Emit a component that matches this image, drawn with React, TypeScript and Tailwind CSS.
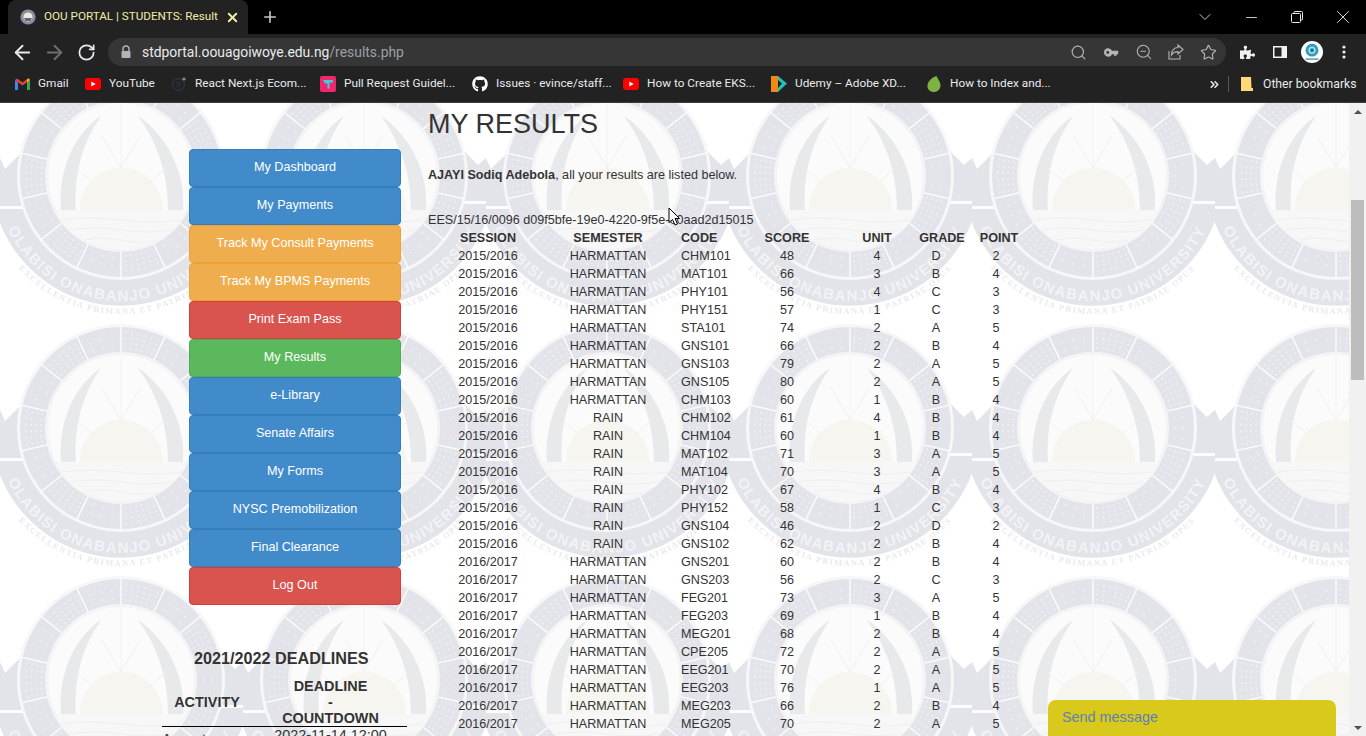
import { ArrowLeft, ArrowRight, RotateCw, Search, ZoomOut, Star, ChevronDown, Minus, X, Plus, ChevronsRight } from "lucide-react";
import { FaGithub, FaPuzzlePiece } from "react-icons/fa";

const NAV = [
  ["My Dashboard", "blue"],
  ["My Payments", "blue"],
  ["Track My Consult Payments", "orange"],
  ["Track My BPMS Payments", "orange"],
  ["Print Exam Pass", "red"],
  ["My Results", "green"],
  ["e-Library", "blue"],
  ["Senate Affairs", "blue"],
  ["My Forms", "blue"],
  ["NYSC Premobilization", "blue"],
  ["Final Clearance", "blue"],
  ["Log Out", "red"],
];

const NAV_STYLE: Record<string, string> = {
  blue: "bg-[#428bca] border-[#357ebd]",
  orange: "bg-[#f0ad4e] border-[#eea236]",
  red: "bg-[#d9534f] border-[#d43f3a]",
  green: "bg-[#5cb85c] border-[#4cae4c]",
};

const H = "HARMATTAN";
const R = "RAIN";
const A = "2015/2016";
const B = "2016/2017";

const RESULTS = [
  [A, H, "CHM101", "48", "4", "D", "2"],
  [A, H, "MAT101", "66", "3", "B", "4"],
  [A, H, "PHY101", "56", "4", "C", "3"],
  [A, H, "PHY151", "57", "1", "C", "3"],
  [A, H, "STA101", "74", "2", "A", "5"],
  [A, H, "GNS101", "66", "2", "B", "4"],
  [A, H, "GNS103", "79", "2", "A", "5"],
  [A, H, "GNS105", "80", "2", "A", "5"],
  [A, H, "CHM103", "60", "1", "B", "4"],
  [A, R, "CHM102", "61", "4", "B", "4"],
  [A, R, "CHM104", "60", "1", "B", "4"],
  [A, R, "MAT102", "71", "3", "A", "5"],
  [A, R, "MAT104", "70", "3", "A", "5"],
  [A, R, "PHY102", "67", "4", "B", "4"],
  [A, R, "PHY152", "58", "1", "C", "3"],
  [A, R, "GNS104", "46", "2", "D", "2"],
  [A, R, "GNS102", "62", "2", "B", "4"],
  [B, H, "GNS201", "60", "2", "B", "4"],
  [B, H, "GNS203", "56", "2", "C", "3"],
  [B, H, "FEG201", "73", "3", "A", "5"],
  [B, H, "FEG203", "69", "1", "B", "4"],
  [B, H, "MEG201", "68", "2", "B", "4"],
  [B, H, "CPE205", "72", "2", "A", "5"],
  [B, H, "EEG201", "70", "2", "A", "5"],
  [B, H, "EEG203", "76", "1", "A", "5"],
  [B, H, "MEG203", "66", "2", "B", "4"],
  [B, H, "MEG205", "70", "2", "A", "5"],
];

// seal geometry, tile coordinates
const CX = 121;
const CY = 106;
const SPOKES = Array.from({ length: 14 }, (_, i) => (i * 360) / 14 - 90);
const RING_DOTS = SPOKES.flatMap((a, i) =>
  i % 2 === 0
    ? [80, 85, 90, 95].flatMap((r) =>
        [-10, -6, -2, 2, 6, 10].map((d) => {
          const t = ((a + 12.8 + d) * Math.PI) / 180;
          return [CX + r * Math.cos(t), CY + r * Math.sin(t)];
        })
      )
    : [82, 90].flatMap((r) =>
        [-7, 0, 7].map((d) => {
          const t = ((a + 12.8 + d) * Math.PI) / 180;
          return [CX + r * Math.cos(t), CY + r * Math.sin(t)];
        })
      )
);

function SealBackground() {
  return (
    <svg className="absolute inset-0 w-full h-full" aria-hidden="true">
      <defs>
        <path id="bandArc" d={`M ${CX - 125} ${CY} A 125 125 0 0 0 ${CX + 125} ${CY}`} />
        <path id="mottoArc" d={`M ${CX - 138} ${CY} A 138 138 0 0 0 ${CX + 138} ${CY}`} />
        <pattern id="seal" x="0" y="-33" width="243" height="252" patternUnits="userSpaceOnUse">
          <rect width="243" height="252" fill="#ffffff" />
          {/* banner ends and text band */}
          <path d="M221 81 L235 95 L243 88 V151 L180 151 V90 Z" fill="#e3e4ea" />
          <path d="M0 88 L5 99 L21 83 L60 90 V153 H0 Z" fill="#e3e4ea" />
          <path d={`M 0 153 A 130 130 0 0 0 243 151 L 200 130 L 40 130 Z`} fill="#e3e4ea" />
          <rect x="218" y="131" width="25" height="3" fill="#fdfdfd" />
          <rect x="0" y="136" width="24" height="3" fill="#fdfdfd" />
          <text fontFamily="Liberation Sans, sans-serif" fontSize="15" fontWeight="700" fill="#f3f3f6" letterSpacing="1.4">
            <textPath href="#bandArc" startOffset="50%" textAnchor="middle">
              OLABISI ONABANJO UNIVERSITY
            </textPath>
          </text>
          <text fontFamily="Liberation Serif, serif" fontSize="8.5" fontWeight="700" fill="#e9eaee" letterSpacing="1.4">
            <textPath href="#mottoArc" startOffset="50%" textAnchor="middle">
              EXCELLENTIA PRIMANA ET PATRIAE OPUS
            </textPath>
          </text>
          {/* dotted ring */}
          <circle cx={CX} cy={CY} r="104" fill="#f7f7f9" />
          <circle cx={CX} cy={CY} r="101" fill="#e3e4ea" />
          {RING_DOTS.map(([x, y], i) => (
            <circle key={i} cx={x} cy={y} r="1" fill="#f0f0f4" />
          ))}
          {SPOKES.map((a) => {
            const t = (a * Math.PI) / 180;
            return (
              <line
                key={a}
                x1={CX + 74 * Math.cos(t)}
                y1={CY + 74 * Math.sin(t)}
                x2={CX + 102 * Math.cos(t)}
                y2={CY + 102 * Math.sin(t)}
                stroke="#fafafb"
                strokeWidth="1.6"
              />
            );
          })}
          {/* inner field */}
          <circle cx={CX} cy={CY} r="76" fill="#f4f4f6" />
          <circle cx={CX} cy={CY} r="73" fill="#fbfbfb" />
          <line x1={CX} y1="34" x2={CX} y2="98" stroke="#f3f3f3" strokeWidth="1" />
          <path d="M101 46 C74 64 58 100 61 140 H76 C74 108 80 76 101 46 Z" fill="#e8e9ea" />
          <path d="M138 46 C165 64 186 100 183 140 H168 C168 108 160 76 138 46 Z" fill="#e8e9ea" />
          <path d="M121 98 L102 66 M121 98 L140 66 M92 112 L76 98 M150 112 L166 98" stroke="#f1f1f1" strokeWidth="1" />
          <path d="M80 140 C80 116 98 98 121 98 C144 98 163 116 163 140 Z" fill="#f6f5ef" />
          <path d="M56 140 H186 C178 166 150 178 121 178 C92 178 64 166 56 140 Z" fill="#f7f7f8" />
          <path d="M62 150 Q90 146 121 150 T180 150 M70 160 Q95 156 121 160 T172 160 M84 170 Q104 166 121 170 T158 170" fill="none" stroke="#efeff1" strokeWidth="1" />
        </pattern>
      </defs>
      <rect width="100%" height="100%" fill="url(#seal)" />
    </svg>
  );
}

function Bookmark({ w, icon, label }: { w: string; icon: React.ReactNode; label: string }) {
  return (
    <div className={`flex items-center shrink-0 ${w}`}>
      <span className="w-[16px] h-[16px] mr-[8px] grid place-items-center shrink-0">{icon}</span>
      <span className="text-[11.8px] text-[#e8eaed] whitespace-nowrap">{label}</span>
    </div>
  );
}

function YouTubeIcon() {
  return (
    <svg width="16" height="12" viewBox="0 0 16 12">
      <rect width="16" height="12" rx="3" fill="#f00" />
      <path d="M6.3 3.4 L10.6 6 L6.3 8.6 Z" fill="#fff" />
    </svg>
  );
}

function BrowserChrome() {
  return (
    <header className="shrink-0 bg-[#222222] border-b border-[#3b3b3b] h-[103px] flex flex-col" style={{ fontFamily: 'Roboto, sans-serif' }}>
      {/* tab strip */}
      <div className="h-[34px] bg-black flex items-stretch pl-[8px] text-[#e8eaed]">
        <div className="w-[240px] bg-[#222222] rounded-t-[8px] flex items-center pl-[12px] pr-[8px]">
          <svg width="16" height="16" viewBox="0 0 16 16" className="shrink-0">
            <rect width="16" height="16" fill="#23233a" />
            <circle cx="8" cy="8" r="7.6" fill="#8d8d98" />
            <circle cx="8" cy="8" r="4.6" fill="#ece9da" />
            <path d="M4 9 H12 L10.5 12 H5.5 Z" fill="#66667a" />
          </svg>
          <span className="ml-[8px] w-[176px] overflow-hidden whitespace-nowrap text-[11.7px] text-[#f0eca6]">OOU PORTAL | STUDENTS: Result</span>
          <X size={15} strokeWidth={3} className="ml-auto text-[#f0eca6]" />
        </div>
        <div className="w-[44px] grid place-items-center">
          <Plus size={18} strokeWidth={2.2} className="text-[#c4c7c5]" />
        </div>
        <div className="ml-auto flex items-center text-[#e8eaed]">
          <span className="w-[46px] grid place-items-center"><ChevronDown size={20} strokeWidth={1} /></span>
          <span className="w-[46px] grid place-items-center"><Minus size={17} strokeWidth={1.2} /></span>
          <span className="w-[46px] grid place-items-center">
            <svg width="12" height="12" viewBox="0 0 12 12" fill="none" stroke="currentColor" strokeWidth="1">
              <rect x="0.5" y="2.5" width="9" height="9" rx="1" />
              <path d="M3 2.5 V1.5 A1 1 0 0 1 4 0.5 H10.5 A1 1 0 0 1 11.5 1.5 V8 A1 1 0 0 1 10.5 9 H9.5" />
            </svg>
          </span>
          <span className="w-[46px] grid place-items-center"><X size={22} strokeWidth={1} /></span>
        </div>
      </div>

      {/* toolbar */}
      <div className="h-[32px] flex items-start text-[#e8eaed]">
        <div className="w-[108px] h-[36px] flex items-center pl-[6px]">
          <span className="w-[32px] grid place-items-center"><ArrowLeft size={23} strokeWidth={2} /></span>
          <span className="w-[32px] grid place-items-center"><ArrowRight size={23} strokeWidth={2} className="text-[#6d6f72]" /></span>
          <span className="w-[32px] grid place-items-center"><RotateCw size={19} strokeWidth={2.2} /></span>
        </div>
        <div className="mt-[4px] w-[1118px] h-[28px] rounded-full bg-[#363636] flex items-center pl-[12px] pr-[1px]">
          <svg width="12" height="14" viewBox="0 0 12 14" className="text-[#b0b3b8]">
            <path d="M3 6 V4 a3 3 0 0 1 6 0 V6" fill="none" stroke="currentColor" strokeWidth="1.4" />
            <rect x="1.5" y="6" width="9" height="7" rx="1" fill="currentColor" />
          </svg>
          <span className="ml-[10px] mt-[1px] text-[13.9px] text-[#e8eaed]">stdportal.oouagoiwoye.edu.ng<span className="text-[#9aa0a6]">/results.php</span></span>
          <div className="ml-auto flex items-center text-[#b4b6ba]">
            <span className="w-[32.5px] grid place-items-center"><Search size={17} strokeWidth={1.6} /></span>
            <span className="w-[32.5px] grid place-items-center">
              <svg width="15" height="9" viewBox="0 0 18 10" fill="currentColor">
                <path d="M5 0 a5 5 0 1 0 4.6 7 H12 V9 H15 V7 H17 V3 H9.6 A5 5 0 0 0 5 0 Z M4.5 3.3 a1.7 1.7 0 1 1 0 3.4 a1.7 1.7 0 0 1 0 -3.4 Z" fillRule="evenodd" />
              </svg>
            </span>
            <span className="w-[32.5px] grid place-items-center"><ZoomOut size={18} strokeWidth={1.4} /></span>
            <span className="w-[32.5px] grid place-items-center">
              <svg width="16" height="16" viewBox="0 0 16 16" fill="none" stroke="currentColor" strokeWidth="1.1">
                <path d="M1 7 V15 H12 V11" />
                <path d="M15 5.5 L10 1 V3.5 C6 3.5 3.5 6.5 3.5 11 C5 8.5 7 7.6 10 7.6 V10 Z" />
              </svg>
            </span>
            <span className="w-[32.5px] grid place-items-center"><Star size={17} strokeWidth={1.6} /></span>
          </div>
        </div>
        <div className="flex-1 h-[36px] flex items-center pl-[14px] text-[#f1f1f1]">
          <FaPuzzlePiece size={15} />
          <svg width="14" height="12" viewBox="0 0 14 12" className="ml-[18px]">
            <rect width="14" height="12" fill="#f1f1f1" />
            <rect x="1.5" y="1.5" width="7" height="9" fill="#222222" />
          </svg>
          <svg width="22" height="22" viewBox="0 0 24 24" className="ml-[14px]">
            <circle cx="12" cy="12" r="12" fill="#ffffff" />
            <circle cx="12" cy="10" r="7" fill="#2a9dc0" />
            <circle cx="12" cy="10" r="4" fill="#a8dde6" />
            <circle cx="12" cy="10" r="2" fill="#1b6f9a" />
            <rect x="5" y="19" width="14" height="1.5" fill="#5a8fb0" />
          </svg>
          <svg width="4" height="14" viewBox="0 0 4 14" className="ml-[19px]" fill="currentColor">
            <circle cx="2" cy="2" r="1.6" />
            <circle cx="2" cy="7" r="1.6" />
            <circle cx="2" cy="12" r="1.6" />
          </svg>
        </div>
      </div>

      {/* bookmarks */}
      <div className="flex-1 flex items-center pl-[14px]">
        <Bookmark
          w="w-[71px]"
          label="Gmail"
          icon={
            <svg width="15" height="12" viewBox="0 0 15 12">
              <path d="M0 2 V12 H3 V4.5 Z" fill="#4285f4" />
              <path d="M15 2 V12 H12 V4.5 Z" fill="#34a853" />
              <path d="M0 2 L7.5 7.6 L15 2 L13 0.5 L7.5 4.5 L2 0.5 Z" fill="#ea4335" />
              <path d="M12 4.5 L15 2 L13.5 0.3 L12 1.4 Z" fill="#fbbc04" />
            </svg>
          }
        />
        <Bookmark w="w-[86px]" label="YouTube" icon={<YouTubeIcon />} />
        <Bookmark
          w="w-[149px]"
          label="React Next.js Ecom..."
          icon={
            <svg width="16" height="16" viewBox="0 0 16 16" fill="none">
              <circle cx="7.5" cy="8.5" r="6" stroke="#2b3340" strokeWidth="1.5" />
              <path d="M5.5 6.5 H9.5 M5.5 8.5 H9.5 M5.5 10.5 H9.5" stroke="#2b3340" />
              <circle cx="13" cy="3" r="1.6" fill="#8a8f98" />
            </svg>
          }
        />
        <Bookmark
          w="w-[152px]"
          label="Pull Request Guidel..."
          icon={
            <svg width="16" height="16" viewBox="0 0 16 16">
              <rect width="16" height="16" rx="2" fill="#f0266f" />
              <path d="M3 4 H13 V6.5 H9.5 V12.5 H7.5 V7.5 H5 Z" fill="#3ecfd8" />
            </svg>
          }
        />
        <Bookmark w="w-[151px]" label="Issues · evince/staff..." icon={<FaGithub size={16} color="#ffffff" />} />
        <Bookmark w="w-[148px]" label="How to Create EKS..." icon={<YouTubeIcon />} />
        <Bookmark
          w="w-[155px]"
          label="Udemy – Adobe XD..."
          icon={
            <svg width="16" height="16" viewBox="0 0 16 16">
              <rect x="0" y="0" width="7" height="16" fill="#f08a14" />
              <path d="M7 0 L16 7.5 L7 16 V12 L11 7.5 L7 4 Z" fill="#22c3b6" />
            </svg>
          }
        />
        <Bookmark
          w="w-[282px]"
          label="How to Index and..."
          icon={
            <svg width="14" height="16" viewBox="0 0 14 16">
              <path d="M9.5 0 C4 2 0 6 0.5 11 C1 14.5 4 16 7 16 C11 16 13.5 13 13.5 9 C13.5 6 11 3.5 9.5 0 Z" fill="#7cb342" />
            </svg>
          }
        />
        <ChevronsRight size={13} strokeWidth={3} className="text-[#e8eaed]" />
        <span className="ml-[7px] w-px h-[16px] bg-[#555555]" />
        <svg width="12" height="14" viewBox="0 0 12 14" className="ml-[12px]">
          <path d="M0 0 H10 L10.5 11 H12 V14 H0 Z" fill="#fdd97a" />
        </svg>
        <span className="ml-[10px] text-[12.2px] text-[#e8eaed] whitespace-nowrap">Other bookmarks</span>
      </div>
    </header>
  );
}

function ResultRow({ cells, bold }: { cells: string[]; bold?: boolean }) {
  return (
    <div className={`flex h-[18px] leading-[18px] text-[12.6px] ${bold ? "font-bold" : ""}`}>
      <div className="w-[120px] text-center">{cells[0]}</div>
      <div className="w-[120px] text-center">{cells[1]}</div>
      <div className="w-[70px] pl-[13px]">{cells[2]}</div>
      <div className="w-[98px] text-center">{cells[3]}</div>
      <div className="w-[82px] text-center">{cells[4]}</div>
      <div className={`w-[48px] text-center ${bold ? "" : "pr-[12px]"}`}>{cells[5]}</div>
      <div className={`w-[66px] text-center ${bold ? "" : "pr-[6px]"}`}>{cells[6]}</div>
    </div>
  );
}

export default function App() {
  return (
    <div className="h-screen w-full flex flex-col overflow-hidden bg-white">
      <BrowserChrome />

      <div className="relative flex-1 flex overflow-hidden" style={{ fontFamily: '"Liberation Sans", Arial, sans-serif' }}>
        <main className="relative flex-1 overflow-hidden text-[#333333]">
          <SealBackground />

          <div className="relative flex pl-[162px]">
            {/* left column */}
            <aside className="w-[245px] pt-[46px] shrink-0">
              <nav className="ml-[27px] w-[212px]">
                {NAV.map(([label, tone]) => (
                  <a key={label} className={`block h-[38px] border rounded-[4px] pt-[7px] text-center text-[12.6px] leading-[20px] text-white ${NAV_STYLE[tone]}`}>
                    {label}
                  </a>
                ))}
              </nav>
              <h4 className="mt-[44px] pl-[32px] text-[16.2px] leading-[18px] font-bold whitespace-nowrap">2021/2022 DEADLINES</h4>
              <div className="mt-[11px] flex items-center h-[49px] border-b border-black text-[14.4px] leading-[16px] font-bold text-center">
                <div className="w-[90px]">ACTIVITY</div>
                <div className="flex-1 pl-[2px]">
                  DEADLINE
                  <br />-<br />
                  COUNTDOWN
                </div>
              </div>
              <div className="flex text-[14.4px] leading-[16px]">
                <div className="w-[90px] pt-[4px]">Acceptance</div>
                <div className="flex-1 pl-[2px] text-center">2022-11-14 12:00</div>
              </div>
            </aside>

            {/* results */}
            <section className="ml-[21px] pt-[5px]">
              <h2 className="text-[27px] leading-[33px]">MY RESULTS</h2>
              <p className="mt-[24px] text-[12.6px] leading-[20px]">
                <b>AJAYI Sodiq Adebola</b>, all your results are listed below.
              </p>
              <p className="mt-[26px] text-[12.6px] leading-[18px]">EES/15/16/0096 d09f5bfe-19e0-4220-9f5e-00aad2d15015</p>
              <ResultRow bold cells={["SESSION", "SEMESTER", "CODE", "SCORE", "UNIT", "GRADE", "POINT"]} />
              {RESULTS.map((r) => (
                <ResultRow key={r[2]} cells={r} />
              ))}
            </section>
          </div>

          {/* mouse pointer */}
          <svg width="13" height="19" viewBox="0 0 13 19" className="absolute left-[668px] top-[104px]">
            <path d="M1 1 V15.5 L4.5 12.5 L7 18 L9.5 17 L7 11.5 H11.5 Z" fill="#ffffff" stroke="#000000" strokeWidth="1" />
          </svg>

          {/* chat widget */}
          <div className="absolute left-[1048px] top-[597px] w-[288px] h-[60px] rounded-t-[8px] bg-[#d8c91c] pl-[14px] pt-[8px] text-[14.4px] leading-[18px] text-[#5b80b8]">Send message</div>
        </main>

        {/* page scrollbar */}
        <div className="w-[17px] shrink-0 bg-[#f1f1f1] flex flex-col items-center">
          <div className="h-[17px] grid place-items-center">
            <span className="w-0 h-0 border-x-[4px] border-x-transparent border-b-[4px] border-b-[#505050]" />
          </div>
          <div className="mt-[80px] w-[13px] h-[180px] bg-[#bdbdbd]" />
          <div className="mt-auto h-[17px] grid place-items-center">
            <span className="w-0 h-0 border-x-[4px] border-x-transparent border-t-[4px] border-t-[#505050]" />
          </div>
        </div>
      </div>
    </div>
  );
}
